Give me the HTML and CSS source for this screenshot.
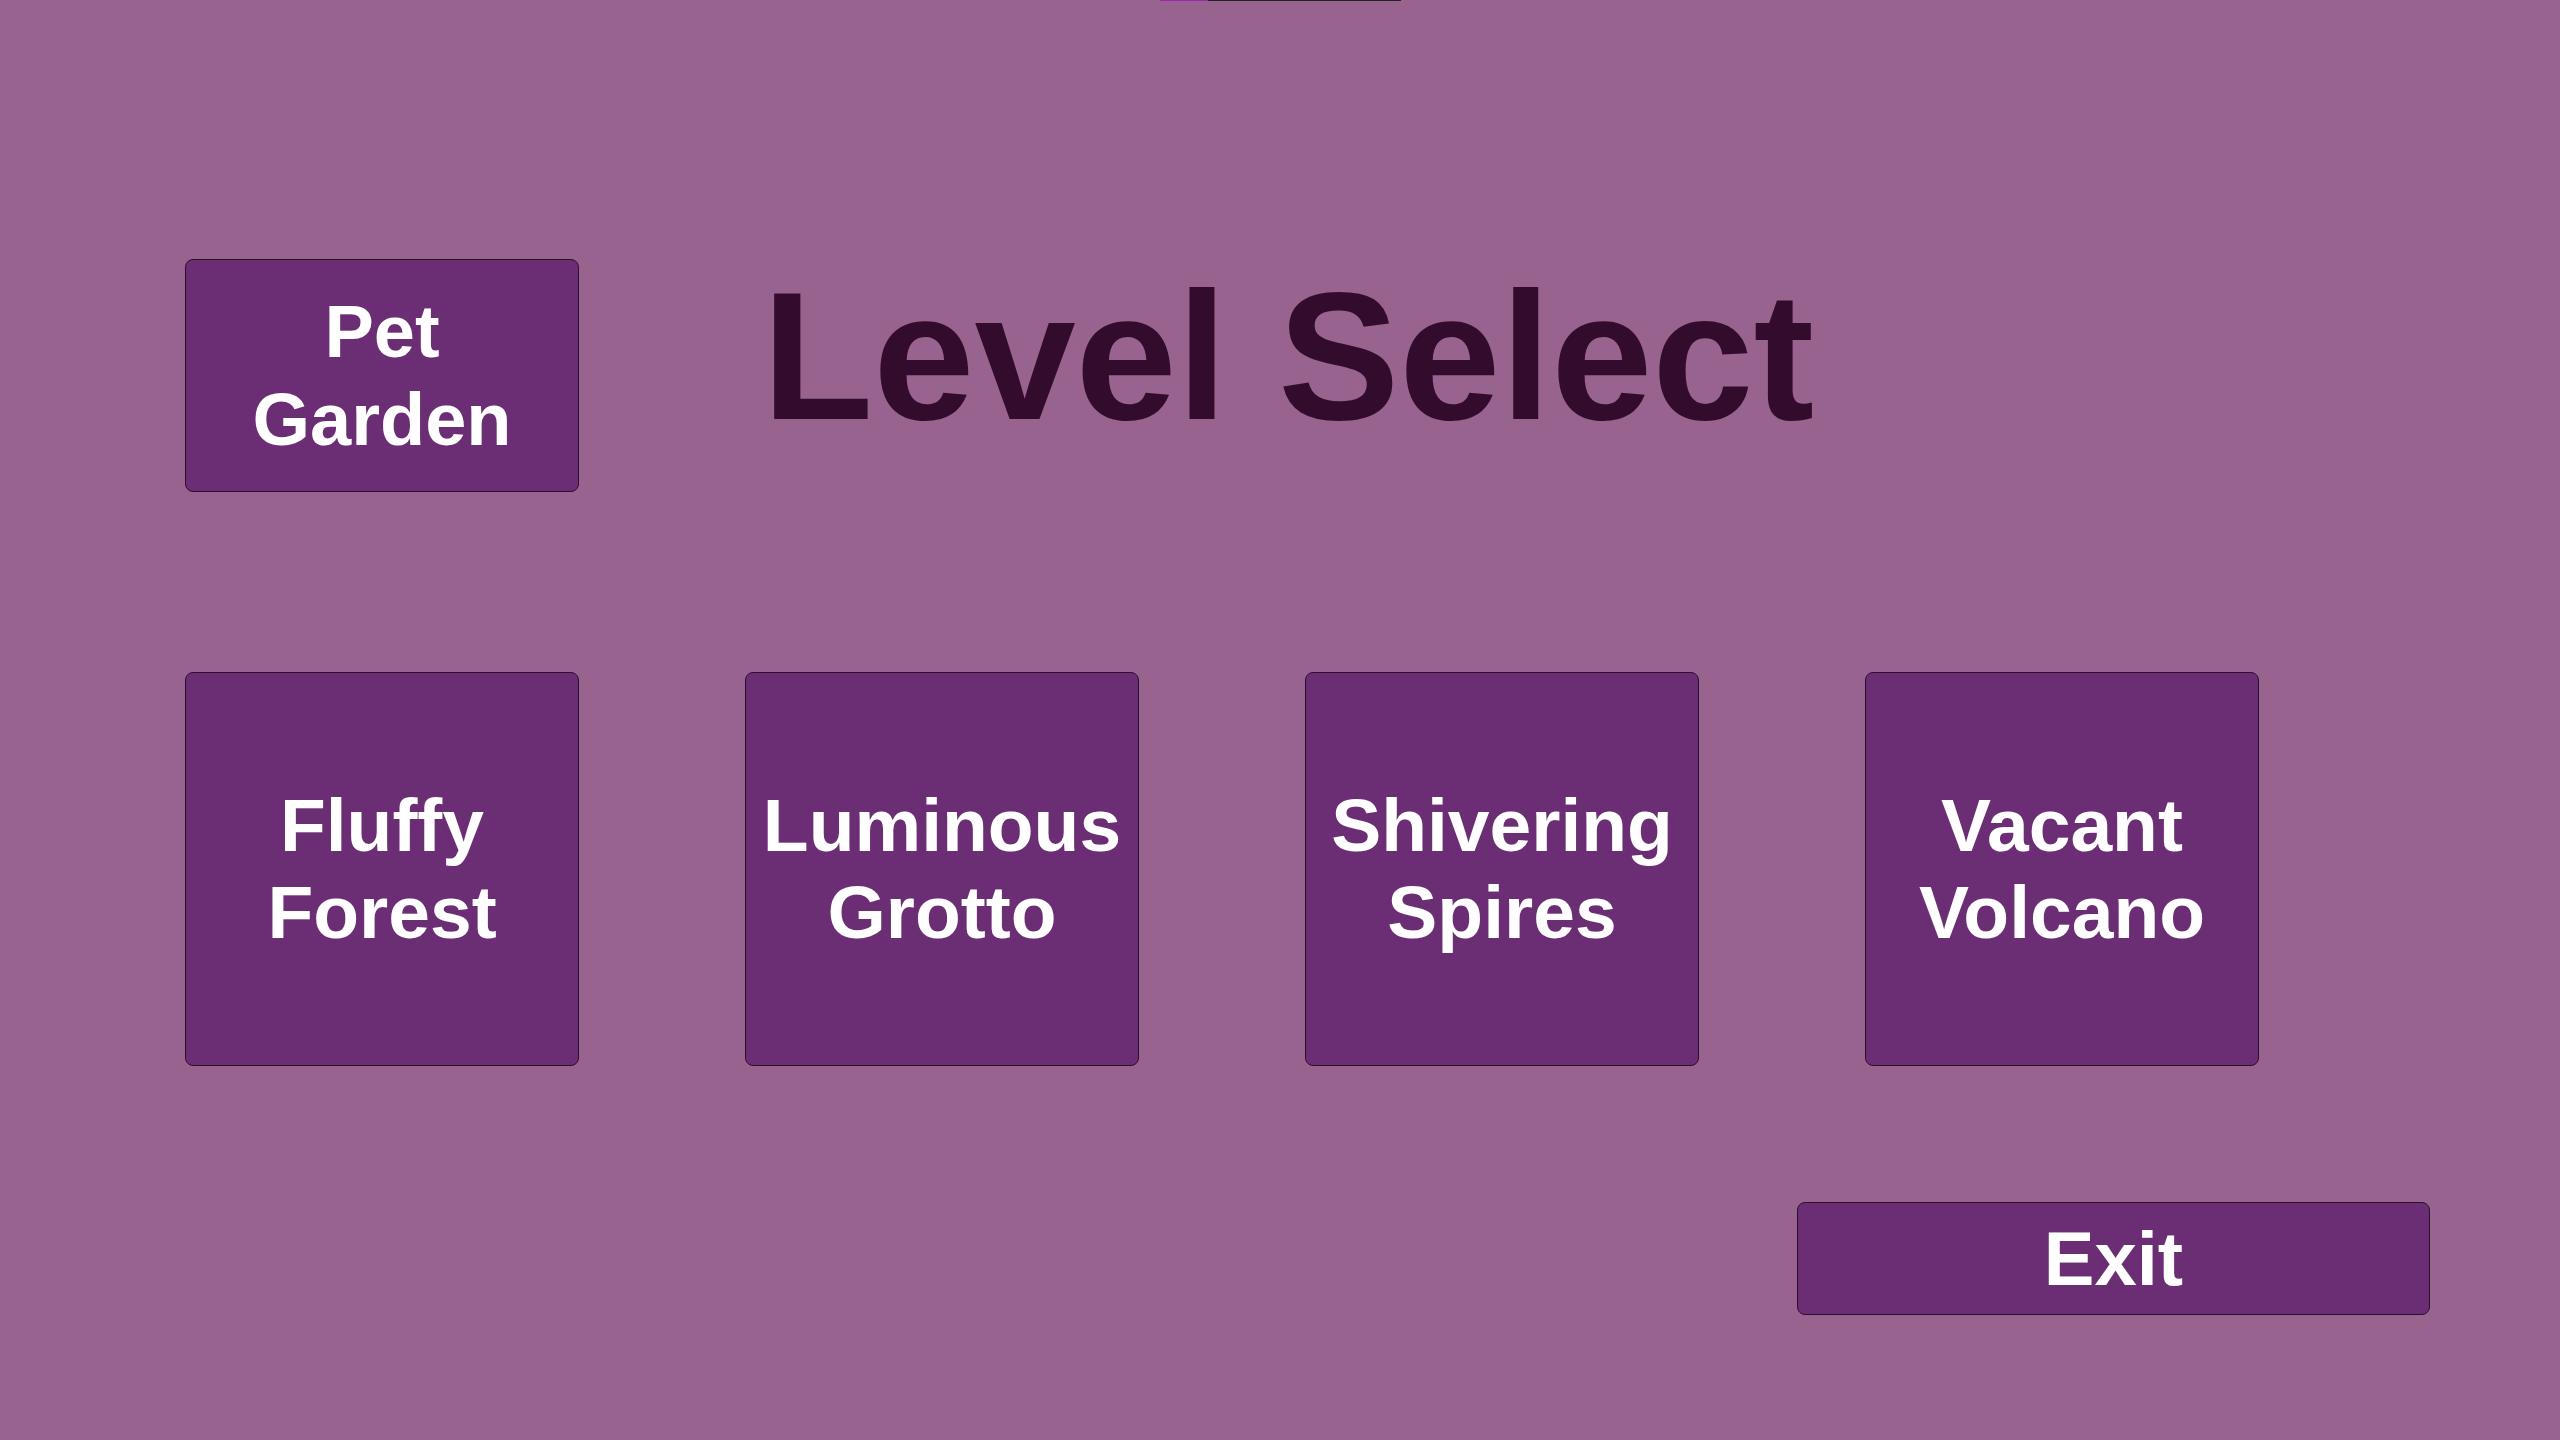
FILE: index.html
```html
<!DOCTYPE html>
<html lang="en">
<head>
<meta charset="utf-8">
<title>Level Select</title>
<link rel="stylesheet" href="styles.css">
</head>
<body>
<div class="progress"><div class="progress-fill"></div><div class="progress-rest"></div></div>
<main class="screen">
  <header class="header">
    <button class="btn btn-pet">Pet<br>Garden</button>
    <h1 class="title">Level Select</h1>
  </header>
  <section class="levels">
    <button class="btn btn-level">Fluffy<br>Forest</button>
    <button class="btn btn-level">Luminous<br>Grotto</button>
    <button class="btn btn-level">Shivering<br>Spires</button>
    <button class="btn btn-level">Vacant<br>Volcano</button>
  </section>
  <footer class="footer">
    <button class="btn btn-exit">Exit</button>
  </footer>
</main>
</body>
</html>
```
FILE: styles.css
```css
html, body {
  margin: 0;
  padding: 0;
}
body {
  width: 2560px;
  height: 1440px;
  background: #98648f;
  font-family: "Liberation Sans", Arial, sans-serif;
  overflow: hidden;
}
.progress {
  display: flex;
  height: 1px;
  margin-left: 1160px;
  width: 241px;
}
.progress-fill {
  width: 48px;
  background: #9c27b0;
}
.progress-rest {
  flex: 1;
  background: #222222;
}
.screen {
  display: flex;
  flex-direction: column;
  padding-left: 185px;
}
.header {
  display: flex;
  align-items: flex-start;
  margin-top: 258px;
}
.btn {
  box-sizing: border-box;
  display: flex;
  align-items: center;
  justify-content: center;
  background: #6b2d73;
  border: 1.5px solid #26122a;
  border-radius: 8px;
  color: #ffffff;
  font-family: "Liberation Sans", Arial, sans-serif;
  font-weight: bold;
  text-align: center;
  padding: 0;
  margin: 0;
}
.btn-pet {
  width: 394px;
  height: 233px;
  font-size: 74px;
  line-height: 88px;
}
.title {
  margin: 6px 0 0 183px;
  font-size: 182px;
  line-height: 182px;
  font-weight: bold;
  color: #330b2d;
  white-space: nowrap;
}
.levels {
  display: flex;
  gap: 166px;
  margin-top: 180px;
}
.btn-level {
  width: 394px;
  height: 394px;
  font-size: 75px;
  line-height: 87px;
}
.footer {
  display: flex;
  margin-top: 136px;
  padding-left: 1612px;
}
.btn-exit {
  width: 633px;
  height: 113px;
  font-size: 76px;
  line-height: 88px;
}
```
